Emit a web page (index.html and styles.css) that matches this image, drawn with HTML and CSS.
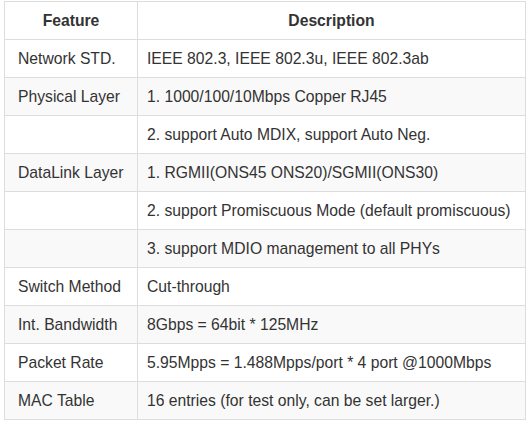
FILE: index.html
```html
<!DOCTYPE html>
<html>
<head>
<meta charset="utf-8">
<link rel="stylesheet" href="styles.css">
</head>
<body>
<div class="wrap">
<table class="spec">
  <colgroup><col class="c1"><col class="c2"></colgroup>
  <thead>
    <tr><th>Feature</th><th>Description</th></tr>
  </thead>
  <tbody>
    <tr><td class="f">Network STD.</td><td class="d">IEEE 802.3, IEEE 802.3u, IEEE 802.3ab</td></tr>
    <tr><td class="f">Physical Layer</td><td class="d">1. 1000/100/10Mbps Copper RJ45</td></tr>
    <tr><td class="f"></td><td class="d">2. support Auto MDIX, support Auto Neg.</td></tr>
    <tr><td class="f">DataLink Layer</td><td class="d">1. RGMII(ONS45 ONS20)/SGMII(ONS30)</td></tr>
    <tr><td class="f"></td><td class="d">2. support Promiscuous Mode (default promiscuous)</td></tr>
    <tr><td class="f"></td><td class="d">3. support MDIO management to all PHYs</td></tr>
    <tr><td class="f">Switch Method</td><td class="d">Cut-through</td></tr>
    <tr><td class="f">Int. Bandwidth</td><td class="d">8Gbps = 64bit * 125MHz</td></tr>
    <tr><td class="f">Packet Rate</td><td class="d">5.95Mpps = 1.488Mpps/port * 4 port @1000Mbps</td></tr>
    <tr><td class="f">MAC Table</td><td class="d">16 entries (for test only, can be set larger.)</td></tr>
  </tbody>
</table>
</div>
</body>
</html>
```

FILE: styles.css
```css
html, body {
  margin: 0;
  padding: 0;
  background: #fff;
}
.wrap {
  padding: 1px 4px 0 4px;
}
.spec {
  border-collapse: collapse;
  width: 522px;
  table-layout: fixed;
  font-family: "Liberation Sans", Arial, sans-serif;
  font-size: 15.7px;
  line-height: 21px;
  color: #333;
}
.spec .c1 { width: 133px; }
.spec th, .spec td {
  border: 1px solid #ddd;
  padding: 8px 10px;
  vertical-align: middle;
  white-space: nowrap;
  height: 21px;
}
.spec th {
  font-weight: bold;
  text-align: center;
}
.spec td.f {
  padding-left: 13px;
}
.spec td.d {
  padding-left: 9px;
}
.spec tbody tr:nth-child(even) {
  background: #f9f9f9;
}
```
